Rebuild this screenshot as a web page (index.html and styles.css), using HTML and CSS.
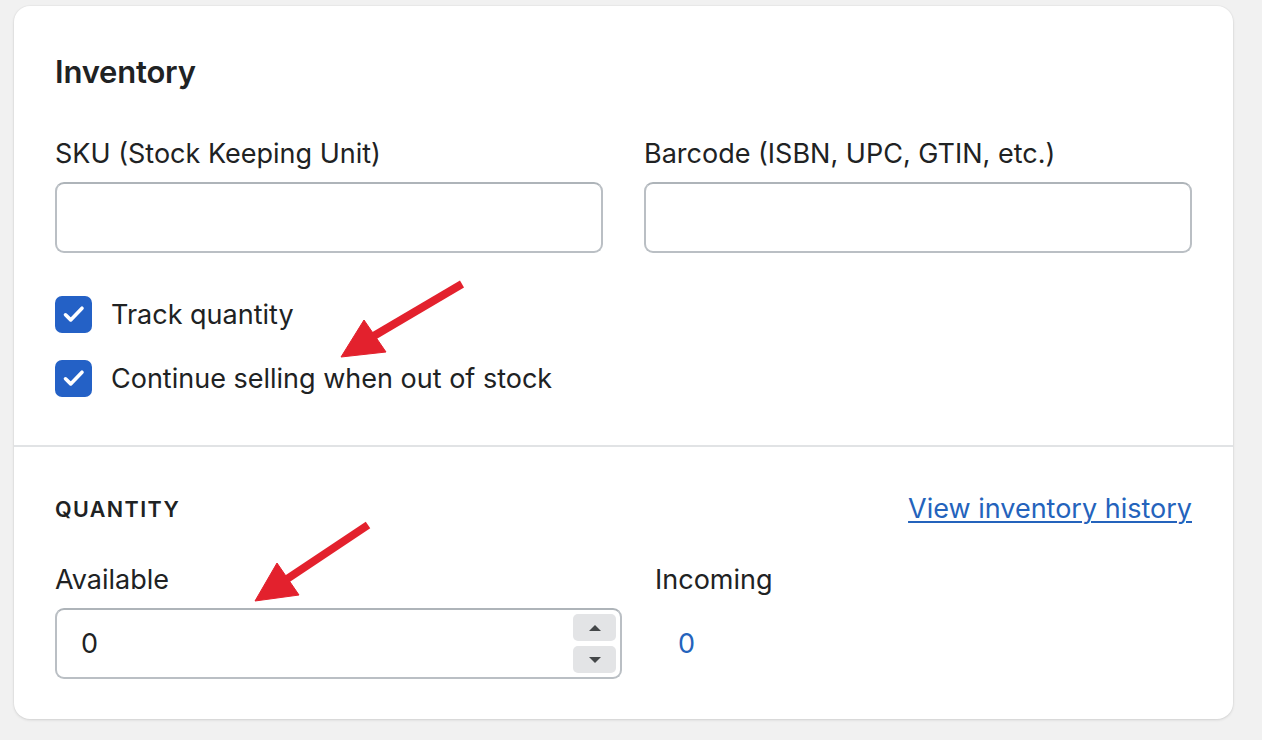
FILE: index.html
```html
<!DOCTYPE html>
<html lang="en">
<head>
<meta charset="utf-8">
<title>Inventory</title>
<link rel="stylesheet" href="styles.css">
</head>
<body>
<div class="page">
  <div class="card">
    <section class="card-section card-section--top">
      <h2 class="card-title">Inventory</h2>
      <div class="field-grid">
        <div class="field">
          <label class="field-label" for="sku">SKU (Stock Keeping Unit)</label>
          <div class="text-input"><input id="sku" type="text"></div>
        </div>
        <div class="field">
          <label class="field-label" for="barcode">Barcode (ISBN, UPC, GTIN, etc.)</label>
          <div class="text-input"><input id="barcode" type="text"></div>
        </div>
      </div>
      <div class="checks">
        <label class="check">
          <span class="check-box">
            <svg viewBox="0 0 37 37" width="37" height="37"><path d="M10.5 18.8l5.2 5.1L27 12.2" fill="none" stroke="#fff" stroke-width="3.6" stroke-linecap="round" stroke-linejoin="round"/></svg>
          </span>
          <span class="check-label">Track quantity</span>
        </label>
        <label class="check">
          <span class="check-box">
            <svg viewBox="0 0 37 37" width="37" height="37"><path d="M10.5 18.8l5.2 5.1L27 12.2" fill="none" stroke="#fff" stroke-width="3.6" stroke-linecap="round" stroke-linejoin="round"/></svg>
          </span>
          <span class="check-label">Continue selling when out of stock</span>
        </label>
      </div>
    </section>
    <section class="card-section card-section--bottom">
      <div class="sub-head">
        <h3 class="sub-title">QUANTITY</h3>
        <a class="link" href="#">View inventory history</a>
      </div>
      <div class="qty-row">
        <div class="field field--available">
          <label class="field-label" for="available">Available</label>
          <div class="text-input number-input">
            <input id="available" type="text" value="0">
            <div class="stepper">
              <span class="step"><span class="tri tri--up"></span></span>
              <span class="step"><span class="tri tri--down"></span></span>
            </div>
          </div>
        </div>
        <div class="field field--incoming">
          <span class="field-label">Incoming</span>
          <div class="incoming-value">0</div>
        </div>
      </div>
    </section>
  </div>

  <svg class="callouts" width="1262" height="740" viewBox="0 0 1262 740">
    <g fill="#e3212d" stroke="#e3212d">
      <line x1="462" y1="284" x2="372" y2="337" stroke-width="8"/>
      <polygon points="341,357 364,320 386,352" stroke-width="1"/>
      <line x1="368" y1="525" x2="284" y2="581" stroke-width="8"/>
      <polygon points="255,601 277,563 299,595" stroke-width="1"/>
    </g>
  </svg>
</div>
</body>
</html>
```

FILE: styles.css
```css
* { box-sizing: border-box; }

html, body {
  margin: 0;
  padding: 0;
}

body {
  background: #f1f1f1;
  font-family: Inter, "Noto Sans", sans-serif;
  color: #202223;
}

.page {
  position: relative;
  width: 1262px;
  height: 740px;
  padding: 6px 29px 0 14px;
}

.card {
  width: 1219px;
  height: 713px;
  background: #fff;
  border-radius: 16px;
  box-shadow: 0 1px 3px rgba(0, 0, 0, 0.12), 0 0 0 1px rgba(0, 0, 0, 0.02);
  display: flex;
  flex-direction: column;
}

.card-section {
  padding: 0 41px;
}

.card-section--top {
  padding-top: 46px;
  padding-bottom: 48px;
  border-bottom: 2px solid #e1e3e5;
}

.card-section--bottom {
  padding-top: 46px;
}

.card-title {
  margin: 0;
  font-size: 31px;
  line-height: 40px;
  font-weight: 600;
  letter-spacing: -0.2px;
}

.field-grid {
  margin-top: 44px;
  display: grid;
  grid-template-columns: 1fr 1fr;
  column-gap: 41px;
}

.field {
  display: flex;
  flex-direction: column;
}

.field-label {
  font-size: 27px;
  line-height: 36px;
  height: 36px;
  margin-bottom: 10px;
}

.text-input {
  height: 71px;
  border: 2px solid #babfc4;
  border-top-color: #aeb4b9;
  border-radius: 9px;
  background: #fff;
  display: flex;
  align-items: center;
}

.text-input input {
  border: 0;
  outline: 0;
  background: transparent;
  width: 100%;
  height: 100%;
  padding: 0 24px;
  font-family: inherit;
  font-size: 27px;
  color: #202223;
}

.checks {
  margin-top: 43px;
  display: flex;
  flex-direction: column;
  gap: 27px;
}

.check {
  display: flex;
  align-items: center;
  height: 37px;
}

.check-box {
  width: 37px;
  height: 37px;
  border-radius: 7px;
  background: #2461c6;
  display: flex;
  align-items: center;
  justify-content: center;
  flex: none;
}

.check-box svg {
  display: block;
}

.check-label {
  margin-left: 19px;
  font-size: 27px;
  line-height: 36px;
}

.sub-head {
  display: flex;
  justify-content: space-between;
  align-items: center;
  height: 32px;
}

.sub-title {
  margin: 0;
  font-size: 21.5px;
  font-weight: 600;
  letter-spacing: 1.4px;
  line-height: 32px;
}

.link {
  font-size: 27px;
  line-height: 32px;
  color: #2463bc;
  text-decoration: underline;
  text-decoration-thickness: 2px;
  text-underline-offset: 3px;
}

.qty-row {
  margin-top: 37px;
  display: flex;
  column-gap: 33px;
}

.field--available {
  width: 567px;
}

.number-input {
  height: 71px;
  padding-right: 4px;
}

.stepper {
  display: flex;
  flex-direction: column;
  gap: 5px;
  flex: none;
}

.step {
  width: 43px;
  height: 27px;
  border-radius: 5px;
  background: #e3e4e6;
  display: flex;
  align-items: center;
  justify-content: center;
}

.tri {
  width: 0;
  height: 0;
  border-left: 6px solid transparent;
  border-right: 6px solid transparent;
}

.tri--up { border-bottom: 6px solid #444749; }
.tri--down { border-top: 6px solid #444749; }

.field--incoming {
  flex: 1;
}

.incoming-value {
  height: 71px;
  display: flex;
  align-items: center;
  padding-left: 23px;
  font-size: 27px;
  color: #2463bc;
}

.callouts {
  position: absolute;
  left: 0;
  top: 0;
  pointer-events: none;
}
```
